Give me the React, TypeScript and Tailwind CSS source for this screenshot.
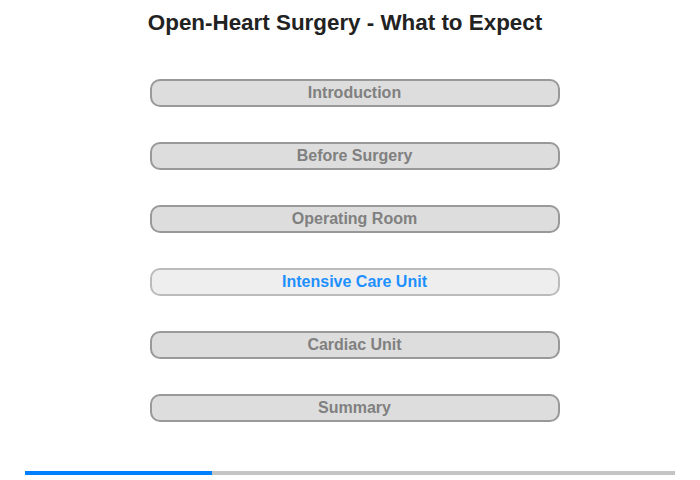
export default function App() {
  const sections = ["Introduction", "Before Surgery", "Operating Room", "Intensive Care Unit", "Cardiac Unit", "Summary"];
  const active = 3;

  return (
    <div className="flex h-[480px] w-[700px] flex-col bg-white font-['Liberation_Sans',Arial,sans-serif]">
      <h1 className="mt-[10px] h-[26px] pr-[10px] text-center text-[22.4px] font-bold leading-[26px] text-[#222]">
        Open-Heart Surgery - What to Expect
      </h1>

      <div className="mt-[43px] flex flex-col items-center gap-[35px] pl-[9px]">
        {sections.map((s, i) => (
          <div
            key={s}
            className={`flex h-[28px] w-[410px] items-center justify-center rounded-[10px] border-2 text-[16px] font-bold ${
              i === active ? "border-[#bbb] bg-[#eee] text-[#1e90ff]" : "border-[#999] bg-[#ddd] text-[#808080]"
            }`}
          >
            {s}
          </div>
        ))}
      </div>

      <div className="mx-[25px] mt-[49px] flex h-[4px] bg-[#c4c4c4]">
        <div className="h-full w-[187px] bg-[#0080ff]" />
      </div>
    </div>
  );
}
